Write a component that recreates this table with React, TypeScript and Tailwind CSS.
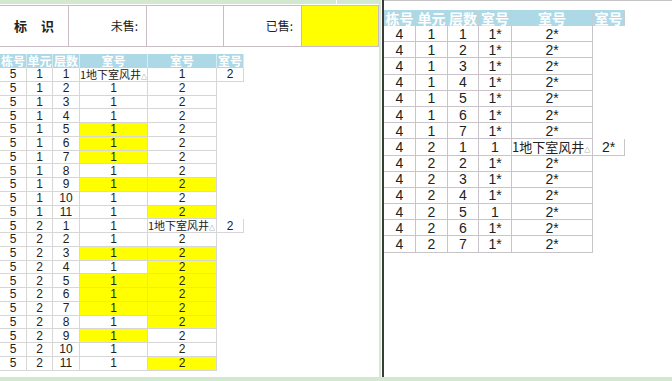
import React from "react"

type LeftRow = {
  b: string
  u: string
  f: string
  c4: string
  c5: string
  c6?: string
  y4?: boolean
  y5?: boolean
}

type RightRow = {
  b: string
  u: string
  f: string
  c4: string
  c5: string
  c6?: string
}

const VENT = "1地下室风井"

const leftRows: LeftRow[] = [
  { b: "5", u: "1", f: "1", c4: VENT, c5: "1", c6: "2" },
  { b: "5", u: "1", f: "2", c4: "1", c5: "2" },
  { b: "5", u: "1", f: "3", c4: "1", c5: "2" },
  { b: "5", u: "1", f: "4", c4: "1", c5: "2" },
  { b: "5", u: "1", f: "5", c4: "1", c5: "2", y4: true },
  { b: "5", u: "1", f: "6", c4: "1", c5: "2", y4: true },
  { b: "5", u: "1", f: "7", c4: "1", c5: "2", y4: true },
  { b: "5", u: "1", f: "8", c4: "1", c5: "2" },
  { b: "5", u: "1", f: "9", c4: "1", c5: "2", y4: true, y5: true },
  { b: "5", u: "1", f: "10", c4: "1", c5: "2" },
  { b: "5", u: "1", f: "11", c4: "1", c5: "2", y5: true },
  { b: "5", u: "2", f: "1", c4: "1", c5: VENT, c6: "2" },
  { b: "5", u: "2", f: "2", c4: "1", c5: "2" },
  { b: "5", u: "2", f: "3", c4: "1", c5: "2", y4: true, y5: true },
  { b: "5", u: "2", f: "4", c4: "1", c5: "2", y5: true },
  { b: "5", u: "2", f: "5", c4: "1", c5: "2", y4: true, y5: true },
  { b: "5", u: "2", f: "6", c4: "1", c5: "2", y4: true, y5: true },
  { b: "5", u: "2", f: "7", c4: "1", c5: "2", y4: true, y5: true },
  { b: "5", u: "2", f: "8", c4: "1", c5: "2", y5: true },
  { b: "5", u: "2", f: "9", c4: "1", c5: "2", y4: true },
  { b: "5", u: "2", f: "10", c4: "1", c5: "2" },
  { b: "5", u: "2", f: "11", c4: "1", c5: "2", y5: true }
]

const rightRows: RightRow[] = [
  { b: "4", u: "1", f: "1", c4: "1*", c5: "2*" },
  { b: "4", u: "1", f: "2", c4: "1*", c5: "2*" },
  { b: "4", u: "1", f: "3", c4: "1*", c5: "2*" },
  { b: "4", u: "1", f: "4", c4: "1*", c5: "2*" },
  { b: "4", u: "1", f: "5", c4: "1*", c5: "2*" },
  { b: "4", u: "1", f: "6", c4: "1*", c5: "2*" },
  { b: "4", u: "1", f: "7", c4: "1*", c5: "2*" },
  { b: "4", u: "2", f: "1", c4: "1", c5: VENT, c6: "2*" },
  { b: "4", u: "2", f: "2", c4: "1*", c5: "2*" },
  { b: "4", u: "2", f: "3", c4: "1*", c5: "2*" },
  { b: "4", u: "2", f: "4", c4: "1*", c5: "2*" },
  { b: "4", u: "2", f: "5", c4: "1", c5: "2*" },
  { b: "4", u: "2", f: "6", c4: "1*", c5: "2*" },
  { b: "4", u: "2", f: "7", c4: "1*", c5: "2*" }
]

const HEADERS = ["栋号", "单元", "层数", "室号", "室号", "室号"]

const DIGITS = { fontFamily: '"Liberation Sans", "Noto Sans CJK SC", sans-serif' }

function VentText({ size }: { size: string }) {
  return (
    <span className={`whitespace-nowrap leading-none ${size}`}>
      {VENT}
      <span className="text-[6px] text-[#555]">△</span>
    </span>
  )
}

function LeftCell({ value, yellow }: { value: string; yellow?: boolean }) {
  const isVent = value === VENT
  return (
    <div
      className={`flex items-center border-b border-r border-[#d6d6d6] leading-none ${
        isVent ? "justify-start" : "justify-center"
      } ${yellow ? "bg-[#ffff00]" : "bg-white"}`}
    >
      {isVent ? <VentText size="text-[11px]" /> : <span style={DIGITS}>{value}</span>}
    </div>
  )
}

function LeftTable() {
  return (
    <div className="mt-[7px] flex flex-col text-[12px] text-[#222]">
      <div className="grid h-[14px] grid-cols-[27px_26px_27px_68px_69px_27px]">
        {HEADERS.map((h, i) => (
          <div
            key={i}
            className="flex items-center justify-center border-r border-[#d7ecf2] bg-[#add8e6] text-[12px] font-bold leading-none text-white"
          >
            {h}
          </div>
        ))}
      </div>
      {leftRows.map((r, i) => (
        <div key={i} className="grid h-[13.75px] grid-cols-[27px_26px_27px_68px_69px_27px]">
          <LeftCell value={r.b} />
          <LeftCell value={r.u} />
          <LeftCell value={r.f} />
          <LeftCell value={r.c4} yellow={r.y4} />
          <LeftCell value={r.c5} yellow={r.y5} />
          {r.c6 ? <LeftCell value={r.c6} /> : <div />}
        </div>
      ))}
    </div>
  )
}

function RightCell({ value }: { value: string }) {
  const isVent = value === VENT
  return (
    <div
      className={`flex items-center border-b border-r border-[#c9c4c9] bg-white leading-none ${
        isVent ? "justify-start" : "justify-center"
      }`}
    >
      {isVent ? <VentText size="text-[13px]" /> : <span style={DIGITS}>{value}</span>}
    </div>
  )
}

function RightTable() {
  return (
    <div className="flex flex-col text-[14px] text-[#222]">
      <div className="grid h-[16px] grid-cols-[32px_32px_31px_33px_81px_32px]">
        {HEADERS.map((h, i) => (
          <div
            key={i}
            className="flex items-center justify-center border-r border-[#c2cfd4] bg-[#add8e6] text-[14px] font-bold leading-none text-white"
          >
            {h}
          </div>
        ))}
      </div>
      {rightRows.map((r, i) => (
        <div key={i} className="grid h-[16.2px] grid-cols-[32px_32px_31px_33px_81px_32px]">
          <RightCell value={r.b} />
          <RightCell value={r.u} />
          <RightCell value={r.f} />
          <RightCell value={r.c4} />
          <RightCell value={r.c5} />
          {r.c6 ? <RightCell value={r.c6} /> : <div />}
        </div>
      ))}
    </div>
  )
}

function SummaryBar() {
  return (
    <div className="mt-[1px] grid h-[42px] grid-cols-[69px_78px_77px_78px_77px] border-y border-[#c9bcc4] text-[12px] text-[#222]">
      <div className="flex items-center justify-center gap-[14px] border-r border-[#c9bcc4] text-[13px] font-bold">
        <span>标</span>
        <span>识</span>
      </div>
      <div className="flex items-center justify-end border-r border-[#c9bcc4] pr-[8px]">未售:</div>
      <div className="border-r border-[#c9bcc4]" />
      <div className="flex items-center justify-end border-r border-[#c9bcc4] pr-[8px]">已售:</div>
      <div className="border-r border-[#c9bcc4] bg-[#ffff00]" />
    </div>
  )
}

export default function App() {
  return (
    <div
      className="flex h-[381px] w-[672px] flex-col overflow-hidden bg-white"
      style={{ fontFamily: '"Noto Sans CJK SC", "Noto Sans", sans-serif' }}
    >
      <div className="flex min-h-0 flex-1">
        <div className="flex w-[379px] flex-col">
          <div className="relative h-[4px] bg-[#d2e8cf]">
            <div className="absolute left-[336px] top-0 h-[4px] w-[1px] bg-white" />
          </div>
          <SummaryBar />
          <LeftTable />
        </div>
        <div className="w-[2px] bg-[#d2e8cf]" />
        <div className="w-[1px] bg-white" />
        <div className="w-[2px] bg-[#3a3a3a]" />
        <div className="flex min-w-0 flex-1 flex-col border-t border-[#c4c4c4] pt-[9px]">
          <RightTable />
        </div>
      </div>
      <div className="h-[4px] bg-[#d2e8cf]" />
    </div>
  )
}
